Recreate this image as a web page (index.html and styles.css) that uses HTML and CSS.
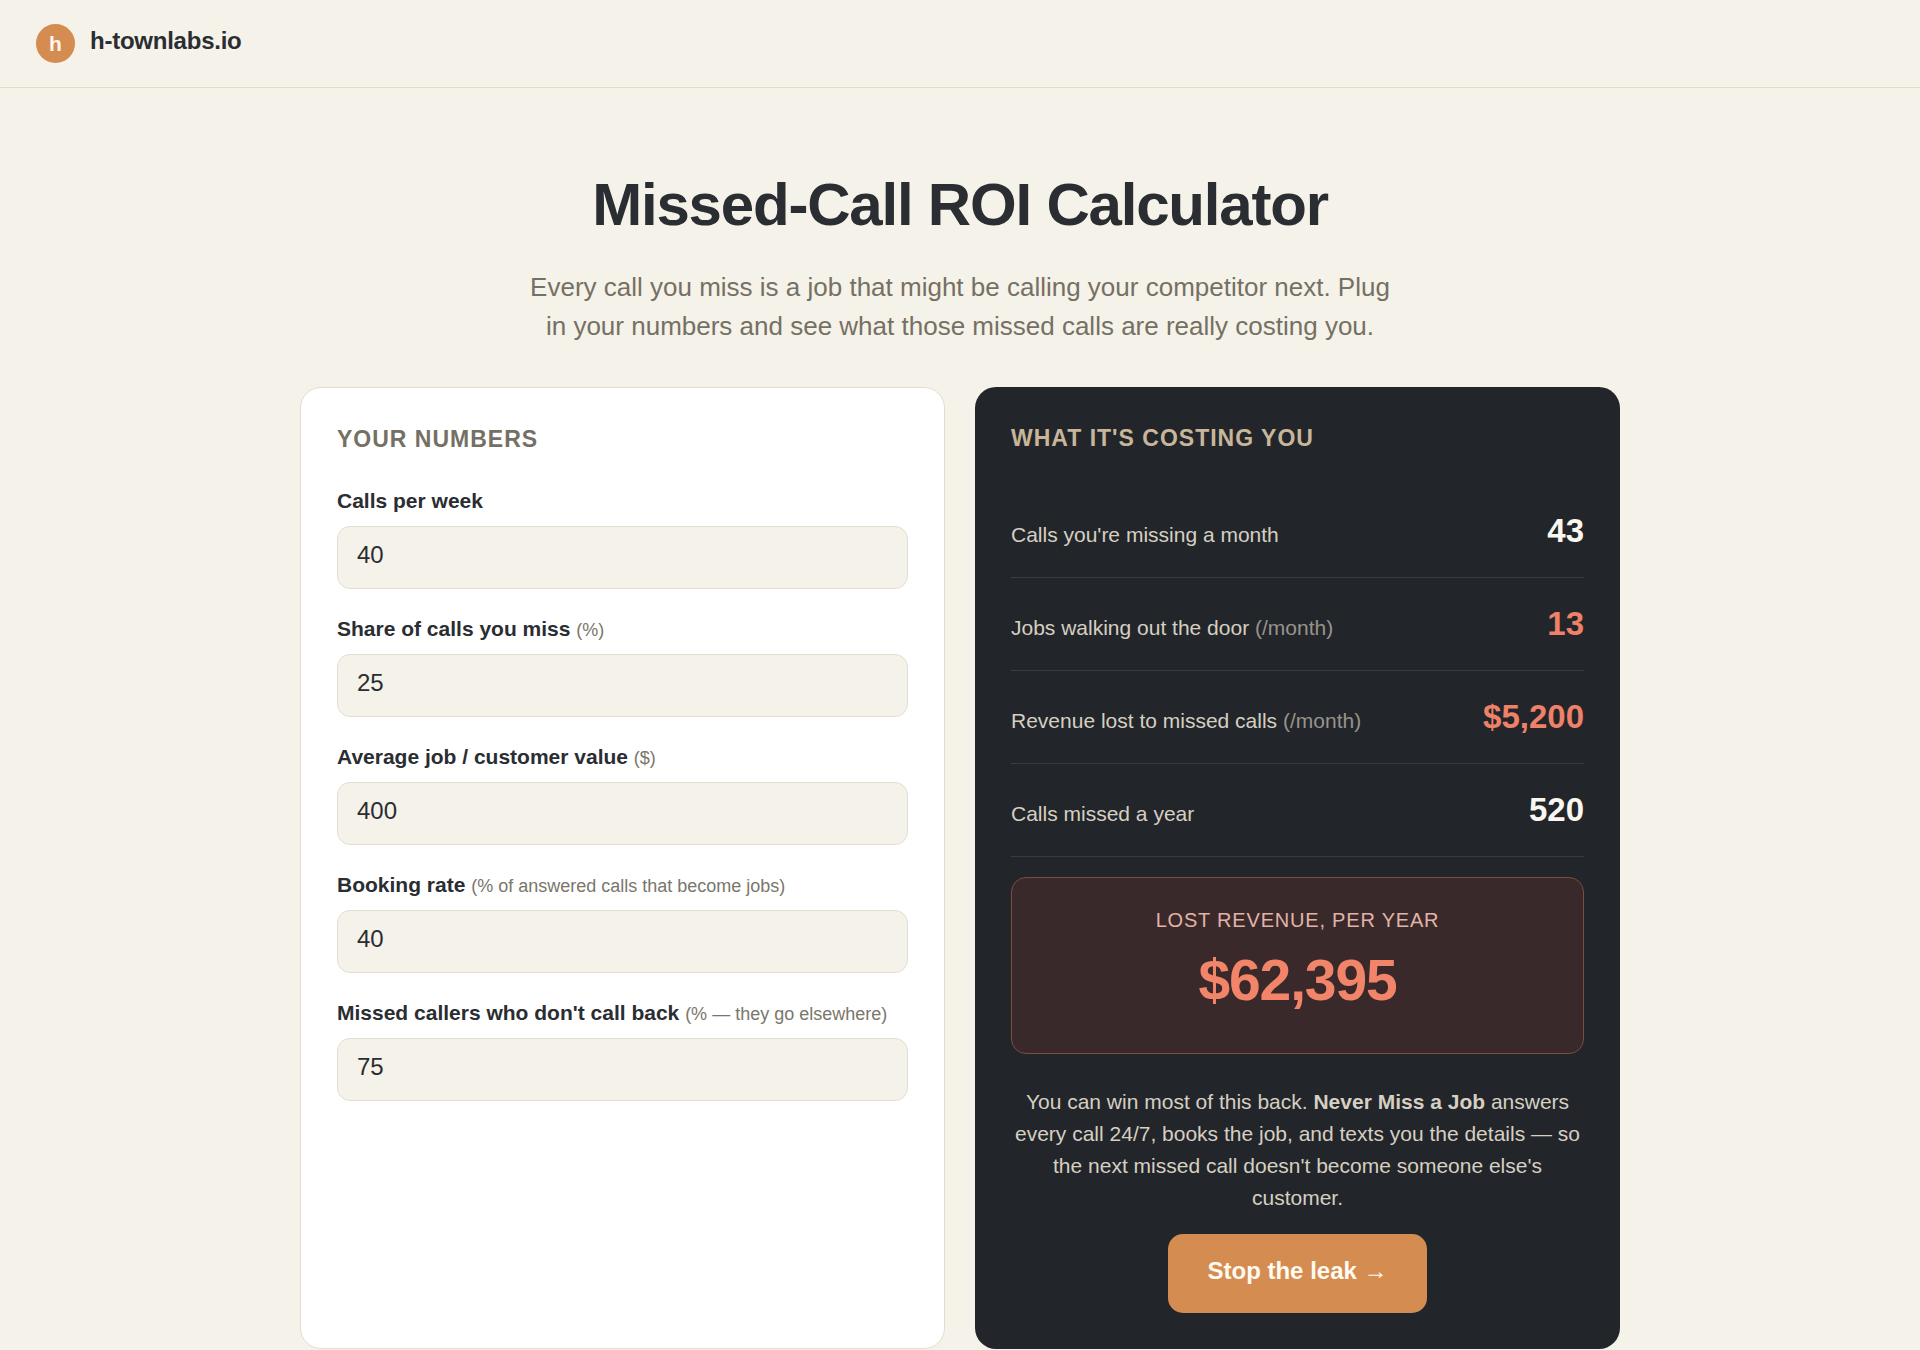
FILE: index.html
```html
<!DOCTYPE html>
<html lang="en">
<head>
    <meta charset="UTF-8">
    <meta name="viewport" content="width=device-width, initial-scale=1.0">
    <title>Missed-Call ROI Calculator - h-townlabs.io</title>
    <link rel="stylesheet" href="styles.css">
</head>
<body>
<header class="site-header">
    <a class="brand" href="#">
        <span class="brand-mark">h</span>
        <span class="brand-name">h-townlabs.io</span>
    </a>
</header>

<main class="page">
    <h1>Missed-Call ROI Calculator</h1>
    <p class="lead">Every call you miss is a job that might be calling your competitor next. Plug in your numbers and see what those missed calls are really costing you.</p>

    <div class="grid">
        <form class="card" id="roiForm">
            <h2>Your numbers</h2>

            <div class="field">
                <label for="calls">Calls per week</label>
                <input type="number" id="calls" value="40" min="0">
            </div>
            <div class="field">
                <label for="missed">Share of calls you miss <span class="hint">(%)</span></label>
                <input type="number" id="missed" value="25" min="0" max="100">
            </div>
            <div class="field">
                <label for="jobValue">Average job / customer value <span class="hint">($)</span></label>
                <input type="number" id="jobValue" value="400" min="0">
            </div>
            <div class="field">
                <label for="booking">Booking rate <span class="hint">(% of answered calls that become jobs)</span></label>
                <input type="number" id="booking" value="40" min="0" max="100">
            </div>
            <div class="field">
                <label for="gone">Missed callers who don't call back <span class="hint">(% — they go elsewhere)</span></label>
                <input type="number" id="gone" value="75" min="0" max="100">
            </div>
        </form>

        <section class="card card-dark">
            <h2>What it's costing you</h2>

            <div class="row">
                <span>Calls you're missing a month</span>
                <span class="value" id="missedMonth">43</span>
            </div>
            <div class="row">
                <span>Jobs walking out the door <span class="per">(/month)</span></span>
                <span class="value loss" id="jobsMonth">13</span>
            </div>
            <div class="row">
                <span>Revenue lost to missed calls <span class="per">(/month)</span></span>
                <span class="value loss" id="revenueMonth">$5,200</span>
            </div>
            <div class="row">
                <span>Calls missed a year</span>
                <span class="value" id="missedYear">520</span>
            </div>

            <div class="total">
                <div class="total-label">Lost revenue, per year</div>
                <div class="total-value" id="revenueYear">$62,395</div>
            </div>

            <p class="pitch">You can win most of this back. <strong>Never Miss a Job</strong> answers every call 24/7, books the job, and texts you the details — so the next missed call doesn't become someone else's customer.</p>
            <a class="cta" href="#">Stop the leak →</a>
        </section>
    </div>
</main>

<script>
const WEEKS_PER_MONTH = 4.333;

function num(id) {
    return Math.max(0, parseFloat(document.getElementById(id).value) || 0);
}

function show(id, value, prefix = '') {
    document.getElementById(id).textContent = prefix + Math.round(value).toLocaleString('en-US');
}

function calculate() {
    const missed = num('calls') * WEEKS_PER_MONTH * num('missed') / 100;
    const jobs = missed * num('booking') / 100 * num('gone') / 100;
    const revenue = jobs * num('jobValue');

    show('missedMonth', missed);
    show('jobsMonth', jobs);
    show('revenueMonth', revenue, '$');
    show('missedYear', missed * 12);
    show('revenueYear', revenue * 12, '$');
}

document.getElementById('roiForm').addEventListener('input', calculate);
calculate();
</script>
</body>
</html>
```
FILE: styles.css
```css
* { box-sizing: border-box; }
body { margin: 0; font-family: "Liberation Sans", Arial, sans-serif; background: #f5f2e9; color: #2a2d31; }

.site-header { padding: 24px 36px; border-bottom: 1px solid #dfdbce; }
.brand { display: flex; gap: 15px; color: inherit; text-decoration: none; }
.brand-mark { width: 39px; height: 39px; border-radius: 50%; background: #d58c50; color: #fdf8f0; font-size: 21px; font-weight: bold; line-height: 39px; text-align: center; }
.brand-name { font-size: 24px; font-weight: bold; line-height: 34px; letter-spacing: -0.01em; }

.page { max-width: 1380px; margin: 0 auto; padding: 84px 30px 0; }
h1 { margin: 0 0 30px; font-size: 60px; line-height: 66px; letter-spacing: -0.02em; text-align: center; }
.lead { max-width: 870px; margin: 0 auto 41px; font-size: 26px; line-height: 39px; color: #757064; text-align: center; }

.grid { display: grid; grid-template-columns: 1fr 1fr; gap: 30px; }
.card { padding: 36px; background: #fff; border: 1px solid #e3ddcf; border-radius: 21px; }
.card h2 { margin: 0 0 31px; font-size: 23px; line-height: 30px; letter-spacing: 1px; text-transform: uppercase; color: #757064; }

.field { margin-bottom: 24px; }
.field label { display: block; margin-bottom: 9px; font-size: 21px; font-weight: bold; line-height: 32px; }
.field .hint { font-size: 18px; font-weight: normal; line-height: 20px; color: #7a766b; }
.field input { display: block; width: 100%; height: 63px; padding: 12px 19px 17px; font-family: inherit; font-size: 24px; color: #2a2d31; background: #f5f2e9; border: 1px solid #e3ddcf; border-radius: 13px; }

.card-dark { background: #22262a; border: 0; color: #d6cfc2; text-align: center; }
.card-dark h2 { color: #c9b69a; text-align: left; margin-bottom: 32px; }
.row { display: flex; justify-content: space-between; align-items: baseline; padding: 23px 0 19px; font-size: 21px; line-height: 46px; border-bottom: 1px solid #383b3f; }
.row .per { color: #98938a; }
.row .value { font-size: 33px; font-weight: bold; color: #faf7f0; }
.row .loss { color: #ee8168; }

.total { margin-top: 20px; padding: 27px 28px 28px; background: #3a292a; border: 1px solid #7d4c43; border-radius: 15px; }
.total-label { font-size: 20px; line-height: 30px; letter-spacing: 0.04em; text-transform: uppercase; color: #e0b4a8; }
.total-value { font-size: 57px; font-weight: bold; line-height: 90px; letter-spacing: -0.02em; color: #f2846a; }

.pitch { margin: 32px 0 20px; font-size: 21px; line-height: 32px; }
.cta { display: inline-block; padding: 19px 39px 24px; font-size: 24px; font-weight: bold; line-height: 36px; color: #fffaf2; background: #d58c50; border-radius: 15px; text-decoration: none; vertical-align: top; }

@media (max-width: 900px) {
    .grid { grid-template-columns: 1fr; }
}
```
